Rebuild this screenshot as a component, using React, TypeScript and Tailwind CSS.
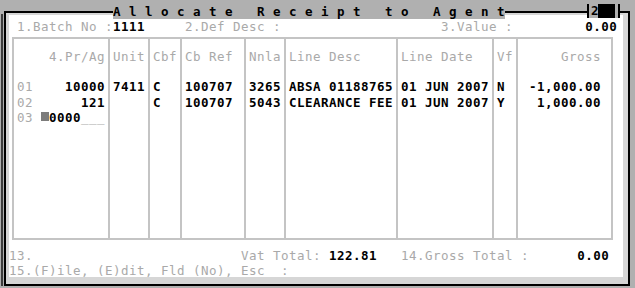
const label = 'text-[#a9a9a9]';
const value = 'font-bold text-black';

type Col = { w: string; cls: string; head: string; rows: string[] };

const cols: Col[] = [
  { w: 'w-[40px]', cls: 'pl-[3px]', head: 'Unit', rows: ['7411', '', ''] },
  { w: 'w-[32px]', cls: 'pl-[3px]', head: 'Cbf', rows: ['C', 'C', ''] },
  { w: 'w-[64px]', cls: 'pl-[3px]', head: 'Cb Ref', rows: ['100707', '100707', ''] },
  { w: 'w-[40px]', cls: 'pl-[3px]', head: 'Nnla', rows: ['3265', '5043', ''] },
  { w: 'w-[112px]', cls: 'pl-[3px]', head: 'Line Desc', rows: ['ABSA 01188765', 'CLEARANCE FEE', ''] },
  { w: 'w-[96px]', cls: 'pl-[3px]', head: 'Line Date', rows: ['01 JUN 2007', '01 JUN 2007', ''] },
  { w: 'w-[24px]', cls: 'pl-[3px]', head: 'Vf', rows: ['N', 'Y', ''] },
];

function Row({ children, className = '' }: { children?: React.ReactNode; className?: string }) {
  return <div className={`h-[15.2px] whitespace-pre ${className}`}>{children}</div>;
}

export default function App() {
  return (
    <div className="w-[635px] h-[288px] overflow-hidden bg-[#b0b0b0] pt-[11px] pl-[1px] flex items-start font-['DejaVu_Sans_Mono',monospace] text-[12.5px] leading-[15.2px] tracking-[0.475px]">
      {/* outer shadow line */}
      <div className="mt-[3px] w-[2px] h-[272px] bg-[#3c3c3c]" />
      {/* frame */}
      <div className="relative ml-[1px] w-[626px] h-[275px] border-2 border-black bg-[#d6d6d6] pt-[2px] pl-[3px]">
        {/* title on the top border */}
        <div className={`absolute top-[-9.5px] left-[107px] h-[15.2px] bg-[#b0b0b0] whitespace-pre ${value}`}>
          A l l o c a t e   R e c e i p t   t o   A g e n t
        </div>
        <div className="absolute top-[-9px] left-[581px] h-[14px] flex bg-[#b0b0b0]">
          <div className="w-[2px] bg-black" />
          <div className={`w-[9px] pl-[2px] leading-[14px] ${value}`}>2</div>
          <div className="w-[17px] bg-black" />
          <div className="w-[3px]" />
          <div className="w-[2px] bg-black" />
        </div>

        {/* panel */}
        <div className="w-[614px] h-[262px] bg-white pt-[3.7px]">
          <Row>
            {' '}
            <span className={label}>1.Batch No :</span>
            <span className={value}>1111</span>
            {'     '}
            <span className={label}>2.Def Desc :</span>
            {'                    '}
            <span className={label}>3.Value :</span>
            {'         '}
            <span className={value}>0.00</span>
          </Row>

          {/* lines table */}
          <div className="mt-[3.1px] ml-[3px] w-[601px] h-[203px] flex border-2 border-[#c4c4c4]">
            <div className="w-[96px] border-r-2 border-[#c4c4c4] px-[3px] pt-[10.1px]">
              <Row className={`text-right ${label}`}>4.Pr/Ag</Row>
              <Row />
              <Row className="flex justify-between">
                <span className={label}>01</span>
                <span className={value}>10000</span>
              </Row>
              <Row className="flex justify-between">
                <span className={label}>02</span>
                <span className={value}>121</span>
              </Row>
              <Row className="flex items-start">
                <span className={label}>03 </span>
                <div className="mt-[2.2px] w-[8px] h-[9px] bg-[#7c7c7c]" />
                <span className={value}>0000</span>
                <span className={label}>___</span>
              </Row>
            </div>
            {cols.map((c) => (
              <div key={c.head} className={`${c.w} ${c.cls} border-r-2 border-[#c4c4c4] pt-[10.1px]`}>
                <Row className={label}>{c.head}</Row>
                <Row />
                {c.rows.map((r, i) => (
                  <Row key={i} className={value}>
                    {r}
                  </Row>
                ))}
              </div>
            ))}
            <div className="flex-1 pr-[10px] pt-[10.1px] text-right">
              <Row className={label}>Gross</Row>
              <Row />
              <Row className={value}>-1,000.00</Row>
              <Row className={value}>1,000.00</Row>
            </div>
          </div>

          {/* totals and prompt */}
          <div className="mt-[7.7px]">
            <Row>
              <span className={label}>13.</span>
              {'                          '}
              <span className={label}>Vat Total:</span>
              {' '}
              <span className={value}>122.81</span>
              {'   '}
              <span className={label}>14.Gross Total :</span>
              {'      '}
              <span className={value}>0.00</span>
            </Row>
            <Row className={label}>15.(F)ile, (E)dit, Fld (No), Esc  :</Row>
          </div>
        </div>
      </div>
    </div>
  );
}
